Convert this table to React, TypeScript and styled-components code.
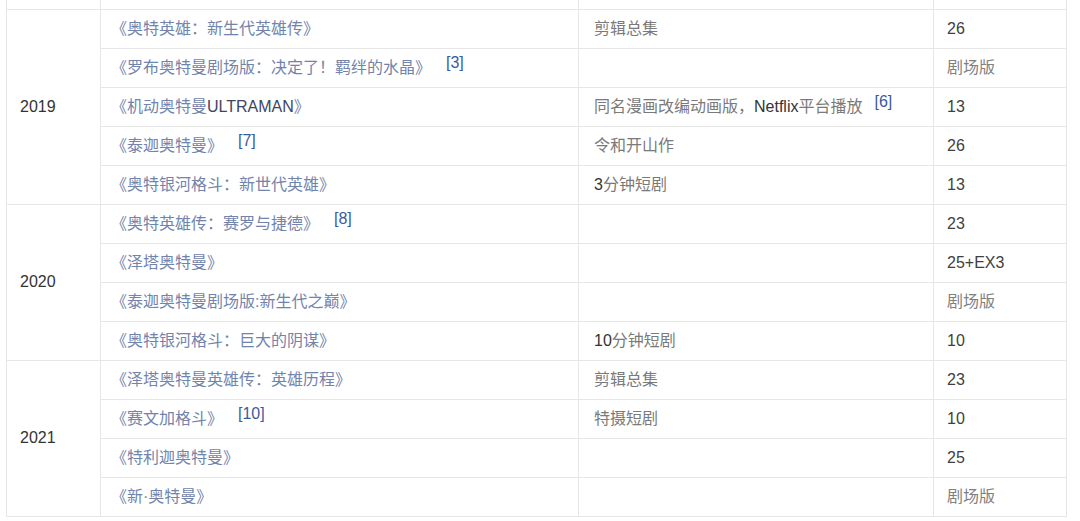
import React from "react";
import styled, {createGlobalStyle} from "styled-components";

const GlobalStyle = createGlobalStyle`
  html, body {
    margin: 0;
    padding: 0;
    background: #ffffff;
  }
  body {
    font-family: "Liberation Sans", "Noto Sans CJK SC", sans-serif;
    font-size: 16px;
  }
`;

const Page = styled.div`
  width: 1080px;
  height: 521px;
  overflow: hidden;
  padding-left: 6px;
  box-sizing: border-box;
`;

const Table = styled.table`
  border-collapse: collapse;
  table-layout: fixed;
  width: 1061px;
`;

const CutRow = styled.tr`
  height: 9px;

  td {
    border-top: none;
    padding: 0;
  }
`;

const BodyRow = styled.tr`
  height: 39px;
`;

const Cell = styled.td`
  border: 1px solid #e6e6e6;
  padding: 0 13px;
  vertical-align: middle;
  line-height: 20px;
  white-space: nowrap;
`;

const YearCell = styled(Cell)`
  color: #333333;
  padding-left: 13px;
`;

const Title = styled.span`
  color: #7284ab;
  margin-left: -3px;
`;

const TitleLatin = styled.span`
  color: #3d465f;
`;

const Latin = styled.span`
  color: #333333;
`;

const Note = styled.span`
  color: #7a7a7a;
  padding-left: 2px;
`;

const Cjk = styled.span`
  color: #808080;
`;

const Count = styled.span`
  color: #3f3f3f;
`;

const Ref = styled.sup<{$gap: number}>`
  color: #3b5a9e;
  font-size: 16px;
  margin-left: ${(p) => p.$gap}px;
  vertical-align: 5px;
  line-height: 0;
`;

type Row = {
  title: React.ReactNode;
  titleRef?: string;
  note?: React.ReactNode;
  noteRef?: string;
  count: React.ReactNode;
};

type Group = {
  year: string;
  rows: Row[];
};

const groups: Group[] = [
  {
    year: "2019",
    rows: [
      {title: "《奥特英雄：新生代英雄传》", note: "剪辑总集", count: "26"},
      {title: "《罗布奥特曼剧场版：决定了！羁绊的水晶》", titleRef: "[3]", count: <Cjk>剧场版</Cjk>},
      {
        title: <>《机动奥特曼<TitleLatin>ULTRAMAN</TitleLatin>》</>,
        note: <>同名漫画改编动画版，<Latin>Netflix</Latin>平台播放</>,
        noteRef: "[6]",
        count: "13",
      },
      {title: "《泰迦奥特曼》", titleRef: "[7]", note: "令和开山作", count: "26"},
      {title: "《奥特银河格斗：新世代英雄》", note: <><Latin>3</Latin>分钟短剧</>, count: "13"},
    ],
  },
  {
    year: "2020",
    rows: [
      {title: "《奥特英雄传：赛罗与捷德》", titleRef: "[8]", count: "23"},
      {title: "《泽塔奥特曼》", count: "25+EX3"},
      {title: "《泰迦奥特曼剧场版:新生代之巅》", count: <Cjk>剧场版</Cjk>},
      {title: "《奥特银河格斗：巨大的阴谋》", note: <><Latin>10</Latin>分钟短剧</>, count: "10"},
    ],
  },
  {
    year: "2021",
    rows: [
      {title: "《泽塔奥特曼英雄传：英雄历程》", note: "剪辑总集", count: "23"},
      {title: "《赛文加格斗》", titleRef: "[10]", note: "特摄短剧", count: "10"},
      {title: "《特利迦奥特曼》", count: "25"},
      {title: "《新·奥特曼》", count: <Cjk>剧场版</Cjk>},
    ],
  },
];

const App = () => {
  return (
    <Page>
      <GlobalStyle />
      <Table>
        <colgroup>
          <col style={{width: 94}} />
          <col style={{width: 478}} />
          <col style={{width: 355}} />
          <col style={{width: 133}} />
        </colgroup>
        <tbody>
          <CutRow>
            <Cell />
            <Cell />
            <Cell />
            <Cell />
          </CutRow>
          {groups.map((g) =>
            g.rows.map((r, i) => (
              <BodyRow key={g.year + i}>
                {i === 0 && <YearCell rowSpan={g.rows.length}>{g.year}</YearCell>}
                <Cell>
                  <Title>{r.title}</Title>
                  {r.titleRef && <Ref $gap={15}>{r.titleRef}</Ref>}
                </Cell>
                <Cell>
                  <Note>{r.note}</Note>
                  {r.noteRef && <Ref $gap={12}>{r.noteRef}</Ref>}
                </Cell>
                <Cell>
                  <Count>{r.count}</Count>
                </Cell>
              </BodyRow>
            ))
          )}
        </tbody>
      </Table>
    </Page>
  );
};

export default App;
